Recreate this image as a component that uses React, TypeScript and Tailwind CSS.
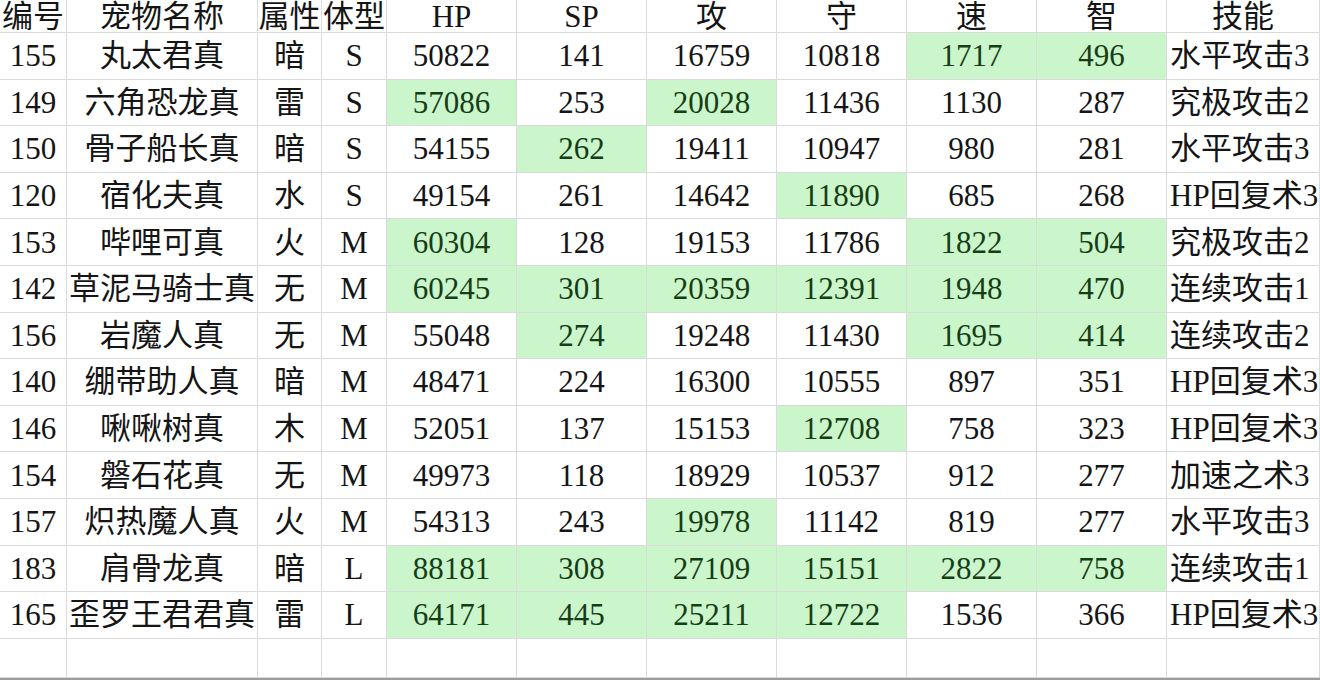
import React from "react";

type Row = {
  id: string;
  name: string;
  attr: string;
  size: string;
  stats: string[];
  green: boolean[];
  skill: string;
};

const T = true;
const F = false;

const rows: Row[] = [
  { id: "155", name: "丸太君真", attr: "暗", size: "S", stats: ["50822", "141", "16759", "10818", "1717", "496"], green: [F, F, F, F, T, T], skill: "水平攻击3" },
  { id: "149", name: "六角恐龙真", attr: "雷", size: "S", stats: ["57086", "253", "20028", "11436", "1130", "287"], green: [T, F, T, F, F, F], skill: "究极攻击2" },
  { id: "150", name: "骨子船长真", attr: "暗", size: "S", stats: ["54155", "262", "19411", "10947", "980", "281"], green: [F, T, F, F, F, F], skill: "水平攻击3" },
  { id: "120", name: "宿化夫真", attr: "水", size: "S", stats: ["49154", "261", "14642", "11890", "685", "268"], green: [F, F, F, T, F, F], skill: "HP回复术3" },
  { id: "153", name: "哔哩可真", attr: "火", size: "M", stats: ["60304", "128", "19153", "11786", "1822", "504"], green: [T, F, F, F, T, T], skill: "究极攻击2" },
  { id: "142", name: "草泥马骑士真", attr: "无", size: "M", stats: ["60245", "301", "20359", "12391", "1948", "470"], green: [T, T, T, T, T, T], skill: "连续攻击1" },
  { id: "156", name: "岩魔人真", attr: "无", size: "M", stats: ["55048", "274", "19248", "11430", "1695", "414"], green: [F, T, F, F, T, T], skill: "连续攻击2" },
  { id: "140", name: "绷带助人真", attr: "暗", size: "M", stats: ["48471", "224", "16300", "10555", "897", "351"], green: [F, F, F, F, F, F], skill: "HP回复术3" },
  { id: "146", name: "啾啾树真", attr: "木", size: "M", stats: ["52051", "137", "15153", "12708", "758", "323"], green: [F, F, F, T, F, F], skill: "HP回复术3" },
  { id: "154", name: "磐石花真", attr: "无", size: "M", stats: ["49973", "118", "18929", "10537", "912", "277"], green: [F, F, F, F, F, F], skill: "加速之术3" },
  { id: "157", name: "炽热魔人真", attr: "火", size: "M", stats: ["54313", "243", "19978", "11142", "819", "277"], green: [F, F, T, F, F, F], skill: "水平攻击3" },
  { id: "183", name: "肩骨龙真", attr: "暗", size: "L", stats: ["88181", "308", "27109", "15151", "2822", "758"], green: [T, T, T, T, T, T], skill: "连续攻击1" },
  { id: "165", name: "歪罗王君君真", attr: "雷", size: "L", stats: ["64171", "445", "25211", "12722", "1536", "366"], green: [T, T, T, T, F, F], skill: "HP回复术3" },
];

const headers = ["编号", "宠物名称", "属性", "体型", "HP", "SP", "攻", "守", "速", "智", "技能"];

const cellBase =
  "flex items-center justify-center whitespace-nowrap overflow-hidden leading-none border-r border-b border-[#dadada]";

function Cell({ children, green, left }: { children?: React.ReactNode; green?: boolean; left?: boolean }) {
  return (
    <div
      className={
        cellBase +
        (green ? " bg-[#cbf6cb] text-[#173d17] border-[#cbf6cb]" : " bg-white text-[#151515]") +
        (left ? " justify-start pl-[3px]" : "")
      }
    >
      {children}
    </div>
  );
}

export default function App() {
  return (
    <div className="w-[1320px] h-[680px] bg-white overflow-hidden font-['Liberation_Serif','Noto_Sans_CJK_SC',serif] text-[31px]">
      <div className="grid grid-cols-[67px_191px_64px_65px_130px_130px_130px_130px_130px_130px_1fr] grid-rows-[33px_repeat(13,46.6px)_39px] border-b-2 border-[#9c9c9c]">
        {headers.map((h, i) => (
          <div
            key={h}
            className={cellBase + " bg-white text-[#151515]" + (i === 10 ? " justify-center" : "")}
          >
            {h}
          </div>
        ))}
        {rows.map((r) => (
          <React.Fragment key={r.id}>
            <Cell>{r.id}</Cell>
            <Cell>{r.name}</Cell>
            <Cell>{r.attr}</Cell>
            <Cell>{r.size}</Cell>
            {r.stats.map((s, i) => (
              <Cell key={i} green={r.green[i]}>
                {s}
              </Cell>
            ))}
            <Cell left>{r.skill}</Cell>
          </React.Fragment>
        ))}
        {headers.map((h) => (
          <Cell key={"e" + h} />
        ))}
      </div>
    </div>
  );
}
